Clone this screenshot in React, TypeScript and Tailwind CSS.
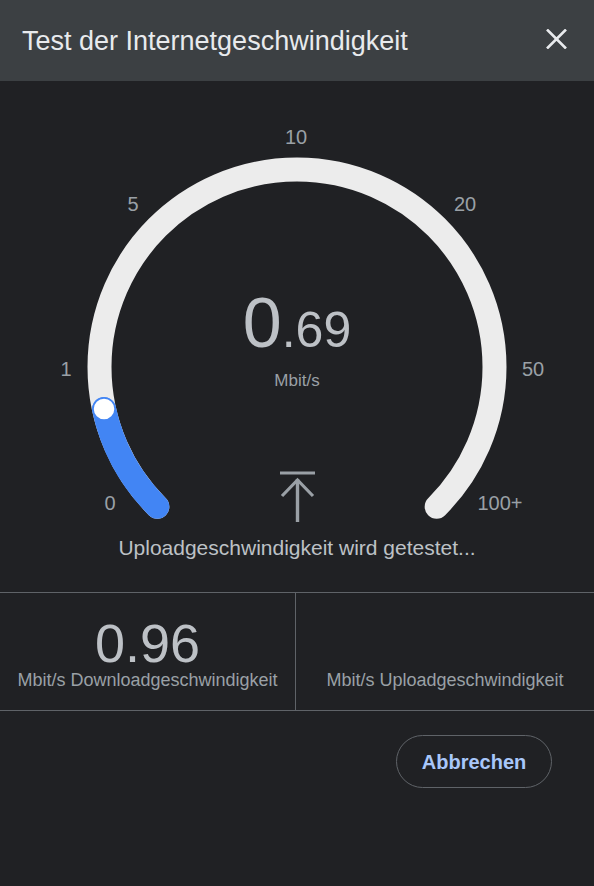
import React from "react";

const CX = 297;
const CY = 286;
const R = 197.5;

function pt(deg: number) {
  const a = (deg * Math.PI) / 180;
  return [CX + R * Math.cos(a), CY + R * Math.sin(a)];
}

const labels: { t: string; x: number; y: number }[] = [
  { t: "10", x: 296, y: 56 },
  { t: "5", x: 133, y: 123 },
  { t: "20", x: 465, y: 123 },
  { t: "1", x: 66, y: 288 },
  { t: "50", x: 533, y: 288 },
  { t: "0", x: 110, y: 422 },
  { t: "100+", x: 500, y: 422 },
];

function Gauge() {
  const [sx, sy] = pt(135);
  const [ex, ey] = pt(45);
  const [kx, ky] = pt(167.7);
  return (
    <svg className="absolute left-0 top-0" width="594" height="511" viewBox="0 0 594 511">
      <path
        d={`M ${sx} ${sy} A ${R} ${R} 0 1 1 ${ex} ${ey}`}
        fill="none"
        stroke="#ececec"
        strokeWidth="24"
        strokeLinecap="round"
      />
      <path
        d={`M ${sx} ${sy} A ${R} ${R} 0 0 1 ${kx} ${ky}`}
        fill="none"
        stroke="#4285f4"
        strokeWidth="24"
        strokeLinecap="round"
      />
      <circle cx={kx} cy={ky} r="11" fill="#ffffff" stroke="#4285f4" strokeWidth="1.5" />
    </svg>
  );
}

export default function App() {
  return (
    <div
      className="w-[594px] h-[886px] bg-[#202124] overflow-hidden"
      style={{ fontFamily: '"Liberation Sans", Arial, sans-serif' }}
    >
      {/* Header */}
      <div className="h-[81px] bg-[#3c4043] flex items-center justify-between pl-[22px] pr-[27px]">
        <div className="text-[27px] leading-[32px] text-[#e8eaed]">Test der Internetgeschwindigkeit</div>
        <svg width="21" height="20" viewBox="0 0 21 20" className="mb-[4px]">
          <path d="M1 0.5 L20 19.5 M20 0.5 L1 19.5" stroke="#e8eaed" strokeWidth="2.6" />
        </svg>
      </div>

      {/* Gauge section */}
      <div className="relative h-[512px] border-b border-[#5f6368] flex flex-col items-center pt-[207px]">
        <Gauge />
        {labels.map((l) => (
          <div
            key={l.t}
            className="absolute -translate-x-1/2 -translate-y-1/2 text-[20px] leading-[24px] text-[#9aa0a6]"
            style={{ left: l.x, top: l.y }}
          >
            {l.t}
          </div>
        ))}
        <div className="relative flex items-baseline leading-none text-[#bdc1c6]">
          <span className="text-[70px] leading-none">0</span>
          <span className="text-[50px] leading-none">.69</span>
        </div>
        <div className="relative mt-[13px] text-[17px] leading-[20px] text-[#9aa0a6]">Mbit/s</div>
        <svg className="relative mt-[76px]" width="40" height="56" viewBox="0 0 40 56">
          <path d="M3 6 H38" stroke="#9aa0a6" strokeWidth="3.2" fill="none" />
          <path d="M20.5 12 V55" stroke="#9aa0a6" strokeWidth="3.4" fill="none" />
          <path d="M5 29 L20.5 13 L36 29" stroke="#9aa0a6" strokeWidth="3.2" fill="none" />
        </svg>
        <div className="relative mt-[13px] text-[21px] leading-[24px] text-[#bdc1c6]">
          Uploadgeschwindigkeit wird getestet...
        </div>
      </div>

      {/* Stats */}
      <div className="grid grid-cols-[296px_1fr] border-b border-[#5f6368]">
        <div className="flex flex-col items-center pt-[23px] pb-[20px] border-r border-[#5f6368]">
          <div className="text-[54px] leading-none text-[#bdc1c6]">0.96</div>
          <div className="text-[18px] leading-[20px] text-[#9aa0a6]">Mbit/s Downloadgeschwindigkeit</div>
        </div>
        <div className="flex flex-col items-center pt-[23px] pb-[20px]">
          <div className="h-[54px]" />
          <div className="text-[18px] leading-[20px] text-[#9aa0a6]">Mbit/s Uploadgeschwindigkeit</div>
        </div>
      </div>

      {/* Button */}
      <div className="flex justify-end pt-[24px] pr-[42px]">
        <button className="w-[156px] h-[53px] rounded-full border border-[#5f6368] text-[20px] font-semibold text-[#a8c7fa] flex items-center justify-center">
          Abbrechen
        </button>
      </div>
    </div>
  );
}
